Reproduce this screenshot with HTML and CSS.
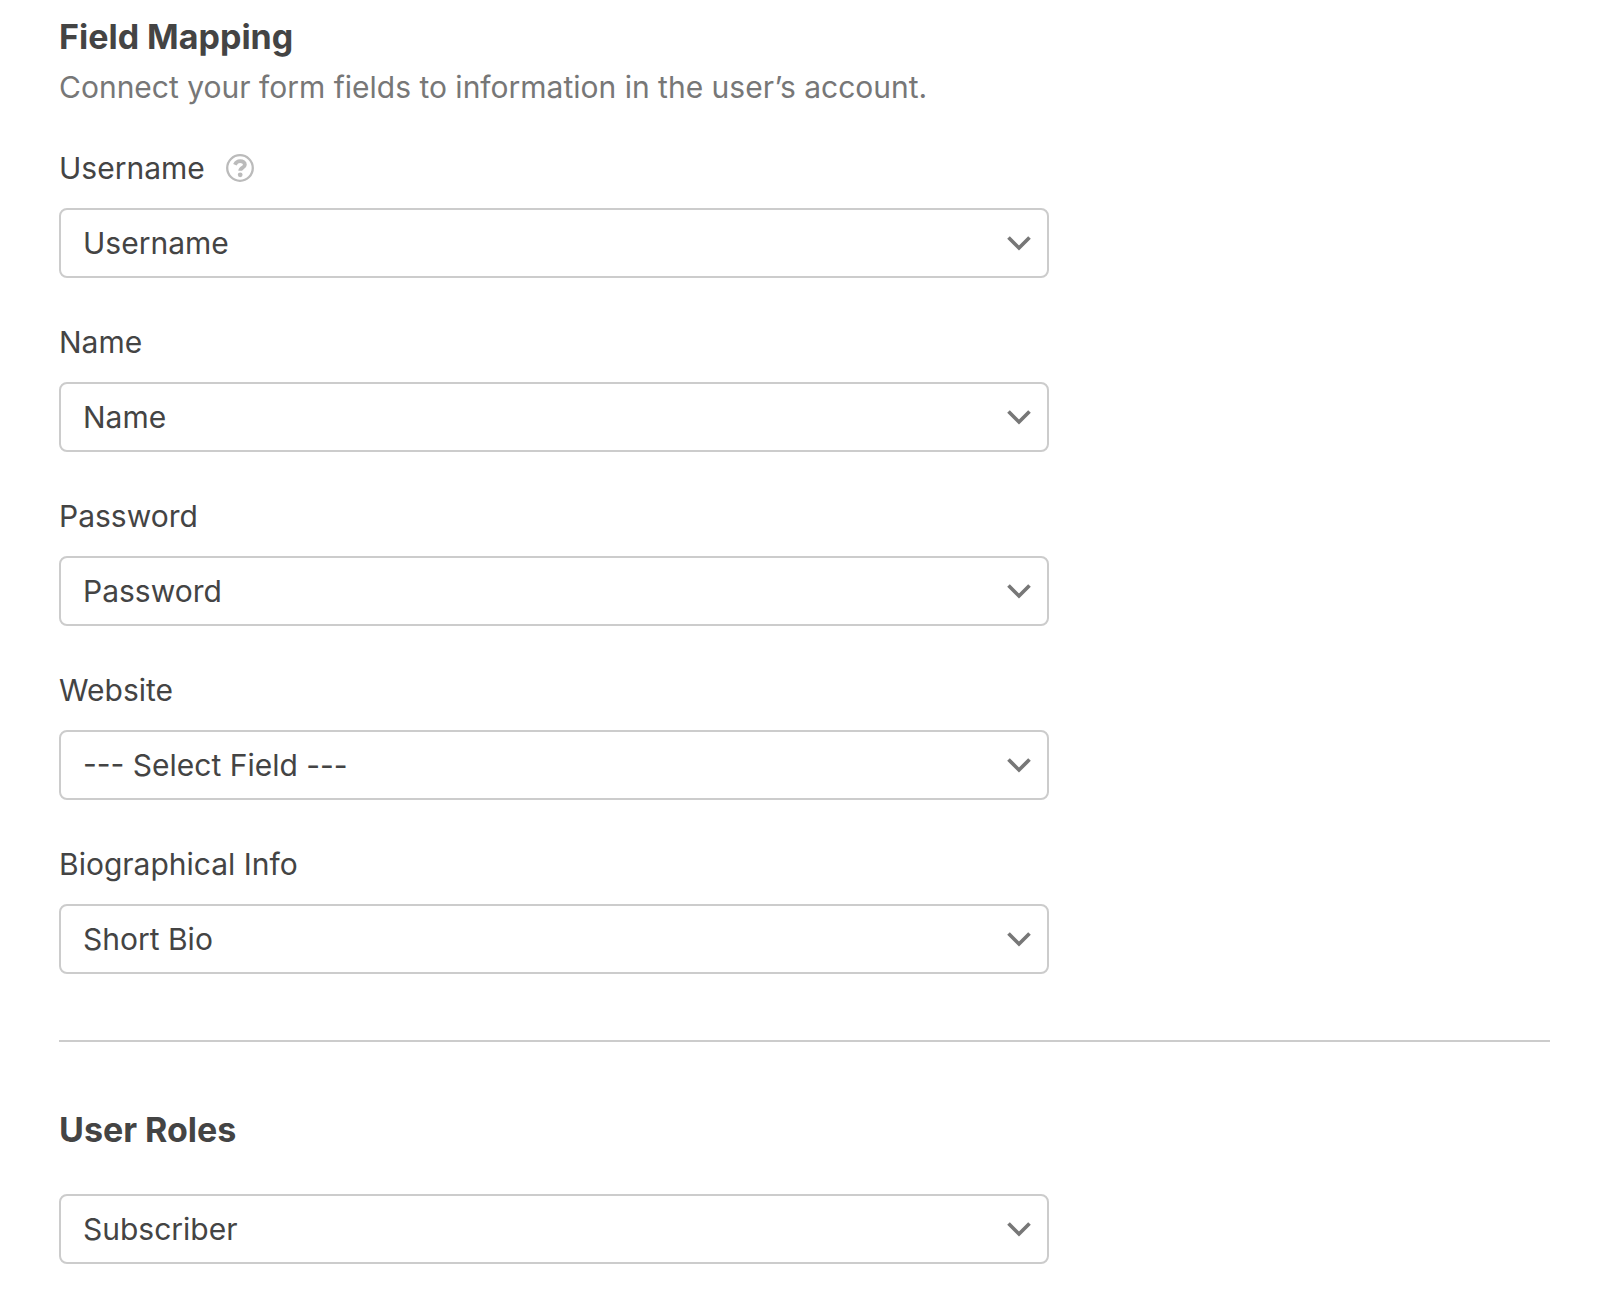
FILE: index.html
```html
<!DOCTYPE html>
<html lang="en">
<head>
<meta charset="utf-8">
<meta name="viewport" content="width=device-width, initial-scale=1">
<title>User Registration</title>
<link rel="stylesheet" href="styles.css">
</head>
<body>
<svg class="symbols" aria-hidden="true">
  <symbol id="chevron" viewBox="0 0 24 16"><path d="M1.500 2.500 12 13 22.500 2.500" fill="none" stroke="currentColor" stroke-width="3.700"/></symbol>
</svg>
<form class="settings">
  <section class="mapping">
    <header class="intro">
      <h2 class="title">Field Mapping</h2>
      <p class="description">Connect your form fields to information in the user’s account.</p>
    </header>
    <div class="field">
      <div class="label-row">
        <label class="label" for="username">Username</label>
        <button class="help" type="button" aria-label="Help">
          <svg class="help-icon" viewBox="0 0 28 28" aria-hidden="true"><circle cx="14" cy="14" r="12.8" fill="none" stroke="currentColor" stroke-width="2.3"/><path d="M8.900 10.700C10.100 8.200 11.700 7.200 14.100 7.200C16.800 7.200 18.900 8.500 18.900 10.800C18.900 13.700 14.200 13.400 14.200 16.800" fill="none" stroke="currentColor" stroke-width="3.800"/><circle cx="14.200" cy="20.800" r="2.400" fill="currentColor"/></svg>
        </button>
      </div>
      <div class="select-box">
        <select class="select" id="username"><option>Username</option></select>
        <svg class="chevron" aria-hidden="true"><use href="#chevron"/></svg>
      </div>
    </div>
    <div class="field">
      <label class="label" for="name">Name</label>
      <div class="select-box">
        <select class="select" id="name"><option>Name</option></select>
        <svg class="chevron" aria-hidden="true"><use href="#chevron"/></svg>
      </div>
    </div>
    <div class="field">
      <label class="label" for="password">Password</label>
      <div class="select-box">
        <select class="select" id="password"><option>Password</option></select>
        <svg class="chevron" aria-hidden="true"><use href="#chevron"/></svg>
      </div>
    </div>
    <div class="field">
      <label class="label" for="website">Website</label>
      <div class="select-box">
        <select class="select" id="website"><option>--- Select Field ---</option></select>
        <svg class="chevron" aria-hidden="true"><use href="#chevron"/></svg>
      </div>
    </div>
    <div class="field">
      <label class="label" for="bio">Biographical Info</label>
      <div class="select-box">
        <select class="select" id="bio"><option>Short Bio</option></select>
        <svg class="chevron" aria-hidden="true"><use href="#chevron"/></svg>
      </div>
    </div>
  </section>
  <section class="roles">
    <h2 class="title" id="roles-title">User Roles</h2>
    <div class="select-box">
      <select class="select" id="role" aria-labelledby="roles-title"><option>Subscriber</option></select>
      <svg class="chevron" aria-hidden="true"><use href="#chevron"/></svg>
    </div>
  </section>
</form>
</body>
</html>
```
FILE: styles.css
```css
* {
  box-sizing: border-box;
}

body {
  margin: 0;
  background: #fff;
  color: #444;
  font-family: Inter, "Liberation Sans", sans-serif;
  font-size: 30px;
  line-height: 40px;
}

.symbols {
  display: none;
}

.settings {
  padding: 15px 50px 36px 59px;
}

.mapping,
.roles {
  display: flex;
  flex-direction: column;
}

.mapping {
  gap: 44px;
  padding-bottom: 66px;
  border-bottom: 2px solid #ccc;
}

.roles {
  gap: 42px;
  padding-top: 66px;
}

.intro {
  display: flex;
  flex-direction: column;
  gap: 8px;
  margin-bottom: -3px;
}

.title {
  margin: 0;
  font-size: 34px;
  font-weight: 650;
  line-height: 44px;
}

.description {
  margin: 0;
  color: #777;
}

.field {
  display: flex;
  flex-direction: column;
  gap: 20px;
}

.label-row {
  display: flex;
  align-items: center;
  gap: 21px;
}

.help {
  display: flex;
  padding: 0;
  border: 0;
  background: none;
  color: #bbb;
  cursor: pointer;
}

.help-icon {
  width: 28px;
  height: 28px;
}

.select-box {
  display: grid;
  align-items: center;
  max-width: 990px;
}

.select,
.chevron {
  grid-area: 1 / 1;
}

.select {
  width: 100%;
  height: 70px;
  padding: 0 60px 0 22px;
  appearance: none;
  border: 2px solid #ccc;
  border-radius: 8px;
  background: #fff;
  color: inherit;
  font: inherit;
}

.chevron {
  justify-self: end;
  width: 24px;
  height: 16px;
  margin-right: 18px;
  color: #777;
  pointer-events: none;
}
```
